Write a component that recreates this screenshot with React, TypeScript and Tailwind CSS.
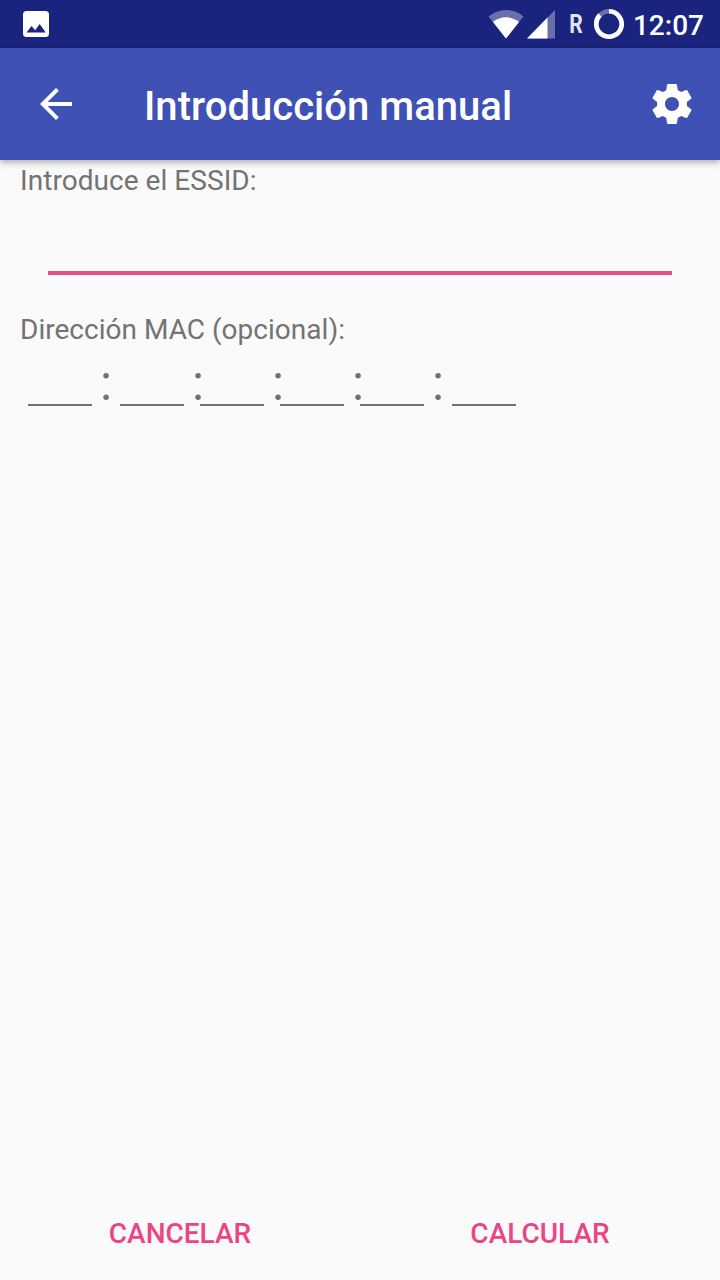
import { useState } from "react";
import { MdArrowBack } from "react-icons/md";

// the middle separators are narrower than their glyph and run into the next octet
const octets = [
    { id: 0, sep: "w-[28px]" },
    { id: 1, sep: "w-[16px] pl-[12px]" },
    { id: 2, sep: "w-[16px] pl-[12px]" },
    { id: 3, sep: "w-[16px] pl-[12px]" },
    { id: 4, sep: "w-[28px]" },
    { id: 5, sep: "" },
];

function GearIcon() {
    return (
        <svg className="h-[48px] w-[48px]" viewBox="0 0 24 24" fill="currentColor">
            <path d="M19.43 12.98c.04-.32.07-.64.07-.98s-.03-.66-.07-.98l2.11-1.65c.19-.15.24-.42.12-.64l-2-3.46c-.12-.22-.39-.3-.61-.22l-2.49 1c-.52-.4-1.08-.73-1.69-.98l-.38-2.65C14.46 2.18 14.25 2 14 2h-4c-.25 0-.46.18-.49.42l-.38 2.65c-.61.25-1.17.59-1.69.98l-2.49-1c-.23-.09-.49 0-.61.22l-2 3.46c-.13.22-.07.49.12.64l2.11 1.65c-.04.32-.07.65-.07.98s.03.66.07.98l-2.11 1.65c-.19.15-.24.42-.12.64l2 3.46c.12.22.39.3.61.22l2.49-1c.52.4 1.08.73 1.69.98l.38 2.65c.03.24.24.42.49.42h4c.25 0 .46-.18.49-.42l.38-2.65c.61-.25 1.17-.59 1.69-.98l2.49 1c.23.09.49 0 .61-.22l2-3.46c.12-.22.07-.49-.12-.64l-2.11-1.65zM12 15.5c-1.93 0-3.5-1.57-3.5-3.5s1.57-3.5 3.5-3.5 3.5 1.57 3.5 3.5-1.57 3.5-3.5 3.5z" />
        </svg>
    );
}

function StatusBar() {
    return (
        <div className="flex h-[48px] items-center bg-[#1a237e] text-white">
            <svg className="ml-[22px] h-[28px] w-[28px]" viewBox="0 0 28 28">
                <rect x="1" y="1" width="26" height="26" rx="3.5" fill="#fff" />
                <path d="M4.5 22.5l5-6.5 3.6 4.2L17.7 14l6 8.5z" fill="#1a237e" />
            </svg>
            <svg className="ml-auto h-[48px] w-[138px]" viewBox="0 0 138 48">
                <path d="M2.5 16.5C12.5 7.8 27.5 7.8 37.5 16.5L20 38.5z" fill="#fff" fillOpacity="0.35" />
                <path d="M7 22C14.5 15.8 25.5 15.8 33 22L20 38.5z" fill="#fff" />
                <path d="M41 38.5L69 10v28.5z" fill="#fff" fillOpacity="0.35" />
                <path d="M41 38.5L61.5 17.5v21z" fill="#fff" />
                <text x="83.2" y="33" fontSize="25" fontWeight="700" fontFamily="Roboto, sans-serif" fill="#fff" fillOpacity="0.9" textLength="13.5" lengthAdjust="spacingAndGlyphs">R</text>
                <circle cx="123" cy="24" r="12.7" fill="none" stroke="#fff" strokeOpacity="0.35" strokeWidth="4.6" />
                <path d="M123 11.3A12.7 12.7 0 1 1 114 15" fill="none" stroke="#fff" strokeWidth="4.6" />
            </svg>
            <span className="ml-[9px] mr-[16px] pt-[4px] text-[28px] leading-none font-medium">12:07</span>
        </div>
    );
}

function AppBar() {
    return (
        <header className="z-10 flex h-[112px] items-center bg-[#3f51b5] text-white shadow-[0_2px_7px_rgba(0,0,0,0.34)]">
            <button className="ml-[32px]" aria-label="Atrás">
                <MdArrowBack size={48} />
            </button>
            <h1 className="ml-[64px] pt-[6px] text-[40px] leading-none font-medium tracking-[0.03px]">Introducción manual</h1>
            <button className="ml-auto mr-[24px]" aria-label="Ajustes">
                <GearIcon />
            </button>
        </header>
    );
}

export default function App() {
    const [essid, setEssid] = useState("");
    const [mac, setMac] = useState<string[]>(octets.map(() => ""));

    const updateOctet = (index: number, value: string) => {
        setMac(mac.map((octet, i) => (i === index ? value : octet)));
    };

    return (
        <div className="flex h-screen flex-col bg-[#fafafa] font-[Roboto,sans-serif] text-[#737373]">
            <StatusBar />
            <AppBar />
            <main className="flex flex-1 flex-col px-[20px]">
                <label className="pt-[4px] text-[28px] leading-[33px] tracking-[0.05px]">Introduce el ESSID:</label>
                <input
                    className="mx-[28px] mt-[24px] h-[54px] border-b-4 border-[#e54d87] bg-transparent text-[36px] outline-none"
                    value={essid}
                    onChange={(e) => setEssid(e.target.value)}
                />
                <label className="mt-[38px] text-[28px] leading-[33px] tracking-[0.02px]">Dirección MAC (opcional):</label>
                <div className="mt-[10px] ml-[8px] flex h-[50px]">
                    {octets.map(({ id, sep }) => (
                        <div key={id} className="flex">
                            <input
                                className="w-[64px] border-b-2 border-[#737373] bg-transparent text-center text-[36px] outline-none"
                                maxLength={2}
                                value={mac[id]}
                                onChange={(e) => updateOctet(id, e.target.value)}
                            />
                            {sep && (
                                <span className={`${sep} flex justify-center text-[50px] leading-[54px]`}>:</span>
                            )}
                        </div>
                    ))}
                </div>
            </main>
            <footer className="flex h-[96px] items-center pt-[4px] text-[28px] font-medium text-[#ec4585]">
                <button className="flex-1">CANCELAR</button>
                <button className="flex-1">CALCULAR</button>
            </footer>
        </div>
    );
}
